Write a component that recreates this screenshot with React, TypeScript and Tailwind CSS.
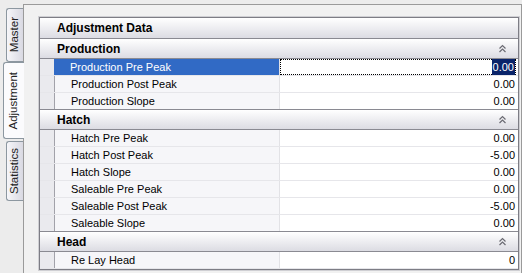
import { Fragment } from "react";

interface Row {
  label: string;
  value: string;
  selected?: boolean;
}

interface Group {
  title: string;
  rows: Row[];
}

const groups: Group[] = [
  {
    title: "Production",
    rows: [
      { label: "Production Pre Peak", value: "0.00", selected: true },
      { label: "Production Post Peak", value: "0.00" },
      { label: "Production Slope", value: "0.00" },
    ],
  },
  {
    title: "Hatch",
    rows: [
      { label: "Hatch Pre Peak", value: "0.00" },
      { label: "Hatch Post Peak", value: "-5.00" },
      { label: "Hatch Slope", value: "0.00" },
      { label: "Saleable Pre Peak", value: "0.00" },
      { label: "Saleable Post Peak", value: "-5.00" },
      { label: "Saleable Slope", value: "0.00" },
    ],
  },
  {
    title: "Head",
    rows: [{ label: "Re Lay Head", value: "0" }],
  },
];

function Collapse() {
  return (
    <svg width="9" height="9" viewBox="0 0 9 9" className="mr-[11px]">
      <polyline points="1.5,4.5 4.5,1.5 7.5,4.5" fill="none" stroke="#6b6b73" strokeWidth="1.2" />
      <polyline points="1.5,8 4.5,5 7.5,8" fill="none" stroke="#6b6b73" strokeWidth="1.2" />
    </svg>
  );
}

function SideTab({ label, active, className }: { label: string; active?: boolean; className?: string }) {
  return (
    <div
      className={`flex items-center justify-center rounded-l-[3px] border border-r-0 border-[#8c97a0] ${
        active
          ? "relative z-10 w-[21px] bg-[#fbfbfd]"
          : "ml-[3px] w-[17px] bg-gradient-to-r from-[#f6f6f9] to-[#d9d9e2]"
      } ${className ?? ""}`}
    >
      <span className="rotate-180 text-[11.5px] leading-none text-[#222] [writing-mode:vertical-rl]">{label}</span>
    </div>
  );
}

export default function App() {
  return (
    <div className="flex h-[273px] w-[522px] bg-[#ececec] font-['Liberation_Sans',Arial,sans-serif] text-black">
      {/* Tabs */}
      <div className="flex w-[23px] flex-col pl-[3px] pt-[8px]">
        <SideTab label="Master" className="h-[54px]" />
        <SideTab label="Adjustment" active className="h-[77px]" />
        <SideTab label="Statistics" className="mt-[2px] h-[60px]" />
      </div>

      {/* Panel */}
      <div className="mt-[4px] flex-1 border-l border-r border-t border-[#9a9a9a] bg-[#f1f1f1] pl-[14px] pr-px pt-[11px]">
        <div className="border border-[#cfcfd3]">
          <div className="border border-[#7d7d85] bg-white">
            <div className="flex h-[21px] items-center border-b border-[#8a8a92] bg-gradient-to-b from-[#ffffff] to-[#dcdce3] pl-[17px] text-[12px] font-bold">
              Adjustment Data
            </div>
            {groups.map((g, gi) => (
              <Fragment key={g.title}>
                <div
                  className={`flex h-[20px] items-center justify-between border-b border-[#8a8a92] bg-gradient-to-b from-[#ffffff] to-[#dcdce3] pl-[17px] text-[12px] font-bold ${
                    gi > 0 ? "h-[21px] border-t" : ""
                  }`}
                >
                  <span>{g.title}</span>
                  <Collapse />
                </div>
                {g.rows.map((r, ri) => (
                  <div
                    key={r.label}
                    className={`flex text-[11px] ${
                      ri < g.rows.length - 1 || gi === groups.length - 1 ? "h-[17px] border-b border-[#e6e6ea]" : "h-[16px]"
                    }`}
                  >
                    <div className="w-[14px] bg-[#eaeaee]" />
                    <div
                      className={`flex w-[225px] items-center pl-[16px] ${
                        r.selected
                          ? "bg-[#316ac5] text-white"
                          : "border-l border-[#a2a2aa] bg-[#f6f6f9]"
                      }`}
                    >
                      {r.label}
                    </div>
                    <div className="flex flex-1 items-center justify-end border-l border-[#e2e2e6] bg-white pr-[2px]">
                      {r.selected ? (
                        <div className="flex h-full w-full items-center justify-end border border-dotted border-black">
                          <span className="bg-[#0a246a] px-px text-white">{r.value}</span>
                        </div>
                      ) : (
                        <span className="pr-px">{r.value}</span>
                      )}
                    </div>
                  </div>
                ))}
              </Fragment>
            ))}
          </div>
        </div>
      </div>
    </div>
  );
}
